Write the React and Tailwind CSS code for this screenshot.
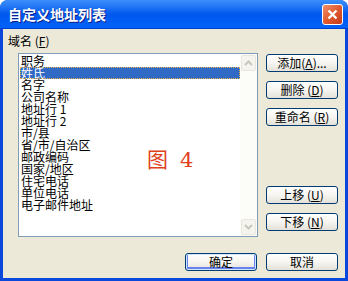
import React from "react";

const items = [
  "职务",
  "姓氏",
  "名字",
  "公司名称",
  "地址行 1",
  "地址行 2",
  "市/县",
  "省/市/自治区",
  "邮政编码",
  "国家/地区",
  "住宅电话",
  "单位电话",
  "电子邮件地址",
];

const font = { fontFamily: '"Noto Sans CJK SC", "Liberation Sans", sans-serif' };

function XpButton({ children, primary, className = "" }) {
  return (
    <button
      className={`h-[18px] w-[72px] rounded-[3px] border border-[#003C74] bg-gradient-to-b from-white via-[#F6F5F1] to-[#E3E1D8] text-[12px] leading-[12px] text-black flex items-center justify-center ${
        primary ? "shadow-[inset_0_0_0_1px_#CEE7FF,inset_0_-1px_0_2px_#6982EE]" : ""
      } ${className}`}
    >
      {children}
    </button>
  );
}

function Mn({ children }) {
  return <span className="underline underline-offset-1">{children}</span>;
}

function Chevron({ down }) {
  return (
    <svg width="9" height="6" viewBox="0 0 9 6">
      <path
        d={down ? "M1 1 L4.5 4.5 L8 1" : "M1 5 L4.5 1.5 L8 5"}
        stroke="#C9C7BA"
        strokeWidth="2"
        fill="none"
      />
    </svg>
  );
}

export default function App() {
  return (
    <div
      className="w-[348px] h-[281px] flex flex-col bg-[#0A48DC] rounded-t-[8px] overflow-hidden"
      style={font}
    >
      {/* title bar */}
      <div className="h-[29px] flex items-center justify-between pl-[8px] pr-[5px] bg-gradient-to-b from-[#3D8FFA] via-[#0058EE] to-[#0062F8] border-b border-[#0040D0]">
        <span className="text-white font-bold text-[14px] leading-[14px] [text-shadow:1px_1px_0_#0A1E8C]">
          自定义地址列表
        </span>
        <div className="w-[21px] h-[21px] rounded-[3px] border border-white bg-gradient-to-br from-[#F0906A] via-[#E05A2E] to-[#C4381A] flex items-center justify-center">
          <svg width="11" height="11" viewBox="0 0 11 11">
            <path d="M1.5 1.5 L9.5 9.5 M9.5 1.5 L1.5 9.5" stroke="white" strokeWidth="2.4" />
          </svg>
        </div>
      </div>

      {/* body */}
      <div className="flex-1 mx-[3px] mb-[3px] bg-[#ECE9D8] flex flex-col pt-[6px]">
        <div className="pl-[5px] text-[12px] leading-[12px] text-black">
          域名 (<Mn>F</Mn>)
        </div>

        <div className="flex mt-[6px]">
          {/* list box */}
          <div className="relative ml-[15px] w-[240px] h-[184px] border border-[#7F9DB9] bg-white flex">
            <div className="flex-1 pt-[1px] pl-[1px]">
              {items.map((t, i) => (
                <div
                  key={t}
                  className={`h-[12px] text-[12px] leading-[12px] pl-[1px] whitespace-nowrap ${
                    i === 1
                      ? "bg-[#316AC5] text-white outline outline-1 outline-dotted outline-[#E8B04A] -outline-offset-1"
                      : "text-black"
                  }`}
                >
                  {t}
                </div>
              ))}
            </div>
            <div className="w-[17px] bg-[#FCFCF9] flex flex-col justify-between p-[1px]">
              <div className="h-[16px] rounded-[2px] border border-[#E8E6DD] bg-[#F5F4EF] flex items-center justify-center">
                <Chevron />
              </div>
              <div className="h-[16px] rounded-[2px] border border-[#E8E6DD] bg-[#F5F4EF] flex items-center justify-center">
                <Chevron down />
              </div>
            </div>
            <div className="absolute left-[128px] top-[95px] text-[21px] leading-[22px] text-[#E0401A] flex gap-[12px] [font-family:'DejaVu_Serif','Noto_Sans_CJK_SC',serif]">
              <span>图</span>
              <span>4</span>
            </div>
          </div>

          {/* right buttons */}
          <div className="ml-[8px] flex flex-col pt-[1px]">
            <XpButton>
              添加(<Mn>A</Mn>)...
            </XpButton>
            <XpButton className="mt-[9px]">
              删除 (<Mn>D</Mn>)
            </XpButton>
            <XpButton className="mt-[9px]">
              重命名 (<Mn>R</Mn>)
            </XpButton>
            <XpButton className="mt-[60px]">
              上移 (<Mn>U</Mn>)
            </XpButton>
            <XpButton className="mt-[9px]">
              下移 (<Mn>N</Mn>)
            </XpButton>
          </div>
        </div>

        <div className="flex justify-end gap-[9px] mt-[16px] pr-[7px]">
          <XpButton primary>确定</XpButton>
          <XpButton>取消</XpButton>
        </div>
      </div>
    </div>
  );
}
